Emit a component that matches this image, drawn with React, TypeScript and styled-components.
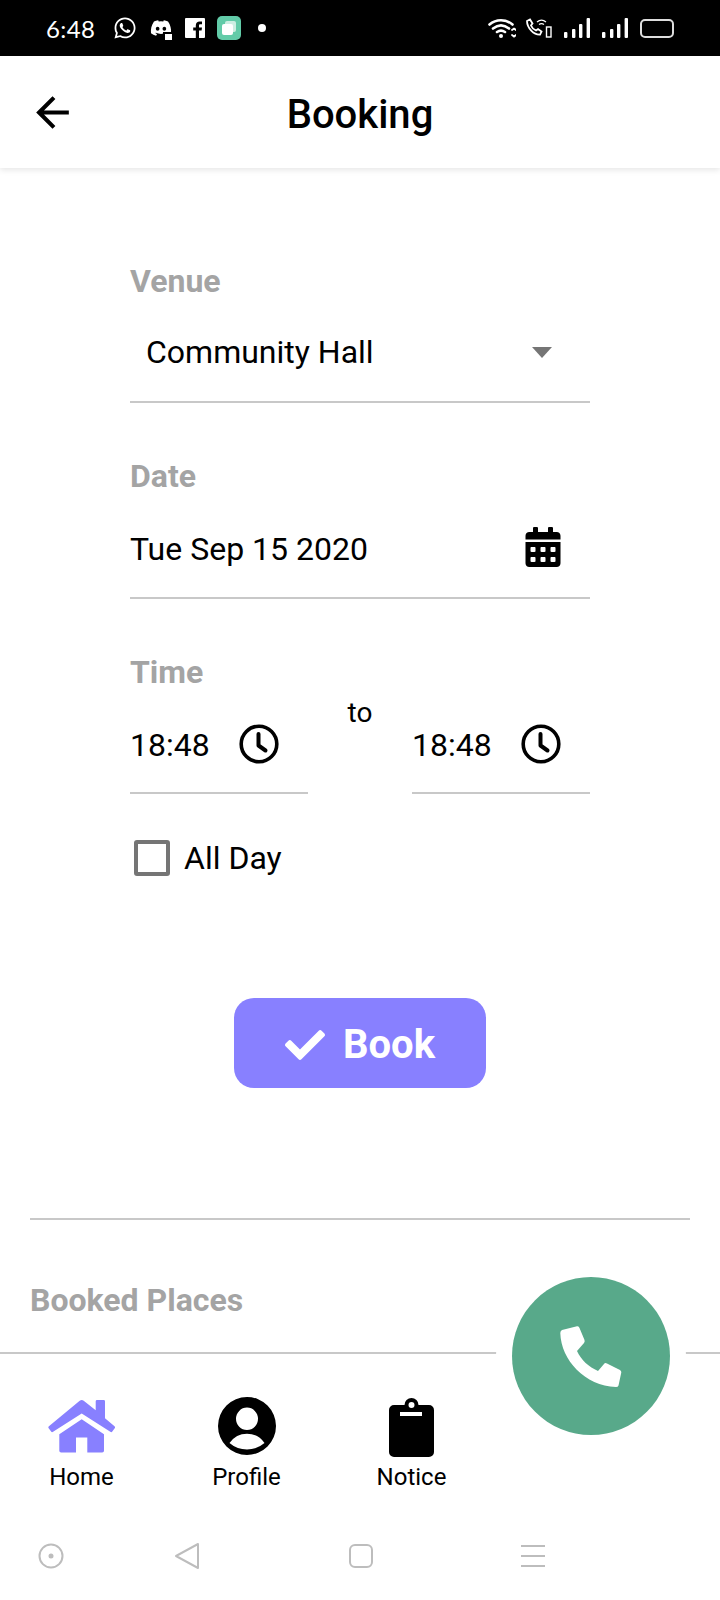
import React, { FC } from 'react';
import styled, { createGlobalStyle } from 'styled-components';
import { FaCalendarAlt, FaCheck, FaDiscord, FaWhatsapp } from 'react-icons/fa';
import { MdArrowBack } from 'react-icons/md';

const GlobalStyle = createGlobalStyle`
  html, body {
    margin: 0;
    padding: 0;
    background: #fff;
  }
  body {
    font-family: Roboto, 'Liberation Sans', sans-serif;
    color: #000;
  }
`;

const Screen = styled.div`
  position: relative;
  width: 720px;
  height: 1600px;
  display: flex;
  flex-direction: column;
  overflow: hidden;
  background: #fff;
`;

const StatusBar = styled.div`
  height: 56px;
  flex: none;
  background: #000;
  color: #fff;
  display: flex;
  align-items: center;
  padding: 0 46px 0 46px;
  box-sizing: border-box;
`;
const StatusTime = styled.span`
  font-family: Lato, Roboto, sans-serif;
  font-size: 24px;
  letter-spacing: 0.4px;
  width: 67px;
  padding-top: 1px;
`;
const StatusLeft = styled.div`
  display: flex;
  align-items: center;
  gap: 13px;
`;
const StatusRight = styled.div`
  margin-left: auto;
  display: flex;
  align-items: center;
  gap: 12px;
`;
const WifiSvg = styled.svg`
  margin-right: -3px;
`;
const Dot = styled.span`
  width: 8px;
  height: 8px;
  border-radius: 50%;
  background: #fff;
  margin-left: 4px;
`;
const AppBadge = styled.span`
  width: 24px;
  height: 24px;
  margin-left: -1px;
  border-radius: 5px;
  background: #62cba8;
  display: flex;
  align-items: center;
  justify-content: center;
`;
const DiscordWrap = styled.span`
  position: relative;
  display: flex;
`;
const DiscordBubble = styled.span`
  position: absolute;
  right: -2px;
  bottom: -3px;
  width: 7px;
  height: 6px;
  background: #fff;
  border: 2px solid #000;
`;
const Battery = styled.span`
  width: 30px;
  height: 15px;
  border: 2px solid #ddd;
  border-radius: 5px;
  box-sizing: content-box;
`;

const Header = styled.header`
  height: 112px;
  flex: none;
  display: flex;
  align-items: center;
  position: relative;
  justify-content: center;
  box-shadow: 0 2px 6px rgba(0, 0, 0, 0.1);
  z-index: 1;
`;
const BackButton = styled.span`
  position: absolute;
  left: 28px;
  top: 32px;
  display: flex;
`;
const Title = styled.h1`
  margin: 0;
  padding-top: 6px;
  font-size: 40px;
  font-weight: 500;
  line-height: 106px;
`;

const Form = styled.div`
  flex: none;
  padding: 95px 130px 0;
  display: flex;
  flex-direction: column;
`;
const Label = styled.div`
  font-size: 32px;
  font-weight: 700;
  line-height: 36px;
  color: #a4a4a4;
`;
const Field = styled.div<{ $indent?: number; $height?: number; $top?: number }>`
  height: ${p => p.$height || 104}px;
  display: flex;
  align-items: center;
  justify-content: space-between;
  padding-left: ${p => p.$indent || 0}px;
  padding-top: ${p => p.$top ?? 6}px;
  box-sizing: border-box;
  border-bottom: 2px solid #c8c8c8;
  margin-bottom: 55px;
  font-size: 32px;
`;
const Caret = styled.span`
  width: 0;
  height: 0;
  border-left: 10px solid transparent;
  border-right: 10px solid transparent;
  border-top: 11px solid #757575;
  margin-right: 38px;
`;
const CalendarWrap = styled.span`
  display: flex;
  margin-right: 27px;
  margin-top: -4px;
`;
const TimeRow = styled.div`
  display: flex;
  justify-content: space-between;
`;
const TimeField = styled(Field)`
  width: 178px;
  margin-bottom: 0;
  padding-right: 29px;
`;
const ToText = styled.span`
  font-size: 28px;
  line-height: 30px;
  margin-top: 8px;
`;
const ClockSvg = styled.svg`
  margin-top: -2px;
`;
const CheckRow = styled.div`
  display: flex;
  align-items: center;
  margin-top: 45px;
  padding-left: 4px;
  font-size: 32px;
  gap: 14px;
`;
const CheckBox = styled.span`
  width: 36px;
  height: 36px;
  border: 4px solid #757575;
  border-radius: 3px;
  box-sizing: border-box;
`;
const BookButton = styled.div`
  align-self: center;
  width: 252px;
  height: 90px;
  padding-top: 3px;
  box-sizing: border-box;
  margin-top: 121px;
  border-radius: 20px;
  background: #8880ff;
  color: #fff;
  display: flex;
  align-items: center;
  justify-content: center;
  gap: 18px;
  font-size: 40px;
  font-weight: 700;
`;

const Divider = styled.div`
  flex: none;
  height: 2px;
  margin: 130px 30px 0;
  background: #c8c8c8;
`;
const SectionTitle = styled.div`
  flex: none;
  margin: 62px 30px 0;
  font-size: 32px;
  font-weight: 700;
  line-height: 36px;
  color: #a4a4a4;
`;

const TabBar = styled.nav`
  flex: none;
  margin-top: 34px;
  height: 177px;
  border-top: 2px solid #c8c8c8;
  display: flex;
  margin-left: -1px;
`;
const Tab = styled.div`
  width: 165px;
  display: flex;
  flex-direction: column;
  align-items: center;
  font-size: 24px;
  line-height: 30px;
  padding-top: 43px;
  gap: 5px;
`;
const TabIcon = styled.span`
  height: 60px;
  display: flex;
  align-items: flex-start;
`;

const CallButton = styled.div`
  position: absolute;
  left: 496px;
  top: 1261px;
  width: 190px;
  height: 190px;
  border-radius: 50%;
  background: #fff;
  display: flex;
  align-items: center;
  justify-content: center;
`;
const CallCircle = styled.div`
  width: 158px;
  height: 158px;
  border-radius: 50%;
  background: #58a98a;
  display: flex;
  align-items: center;
  justify-content: center;
`;

const NavBar = styled.div`
  flex: none;
  display: flex;
  height: 50px;
  align-items: center;
  padding-left: 38px;
`;
const NavSlot = styled.span<{ $w: number }>`
  width: ${p => p.$w}px;
  display: flex;
`;

const FacebookIcon: FC = () => (
  <svg width="20" height="20" viewBox="0 0 20 20">
    <path fill="#fff" fillRule="evenodd" d="M1 0h18a1 1 0 0 1 1 1v18a1 1 0 0 1-1 1h-5v-7.600h2.600l.4-3h-3V7.600c0-.9.3-1.400 1.500-1.400H17V3.500c-.3 0-1.200-.1-2.300-.1-2.300 0-3.900 1.400-3.900 4v2H8.200v3h2.600V20H1a1 1 0 0 1-1-1V1a1 1 0 0 1 1-1z" />
  </svg>
);

const WifiIcon: FC = () => (
  <WifiSvg width="28" height="20" viewBox="0 0 28 20" fill="none" stroke="#fff" strokeLinecap="round">
    <path strokeWidth="2.600" d="M1.500 6.500C8 .8 18 .8 24.500 6.500M5 10.500c5-4 11-4 16 0M9 14c3-2 5-2 8 0" />
    <circle cx="13" cy="18" r="2" fill="#fff" stroke="none" />
    <path strokeWidth="1.800" d="M24 12l2-1.500 2 1.500M24 17l2 1.500 2-1.500" />
  </WifiSvg>
);

const CallWifiIcon: FC = () => (
  <svg width="27" height="20" viewBox="0 0 27 20" fill="none" stroke="#fff">
    <path strokeWidth="1.800" d="M2 3l3-1.500 2.500 4-1.500 2c1 2.500 2.500 4 5 5l2-1.400 3.500 2.500-1.500 3C9 17 2 10 2 3z" />
    <path strokeWidth="1.300" d="M12 4c3-2.500 6-2.500 9 0M14 6.500c2-1.300 3-1.300 5 0" />
    <rect x="21.500" y="9" width="4.500" height="10" strokeWidth="1.400" />
  </svg>
);

const SignalIcon: FC = () => (
  <svg width="26" height="20" viewBox="0 0 26 20" fill="#fff">
    <rect x="0" y="14" width="3.400" height="6" rx="1" />
    <rect x="8" y="11" width="3.400" height="9" rx="1" />
    <rect x="15" y="6" width="3.400" height="14" rx="1" />
    <rect x="22.600" y="0" width="3.400" height="20" rx="1" />
  </svg>
);

const ClockIcon: FC = () => (
  <ClockSvg width="40" height="40" viewBox="0 0 40 40" fill="none" stroke="#000">
    <circle cx="20" cy="20" r="17.800" strokeWidth="3.600" />
    <path strokeWidth="4" strokeLinecap="round" strokeLinejoin="round" d="M19.500 10v11.500l7 5" />
  </ClockSvg>
);

const HomeIcon: FC = () => (
  <svg width="68" height="60" viewBox="18 12.700 68 60" fill="#8880ff">
    <path d="M49.700 16.500Q51.700 15 53.700 16.500L65.700 26V17Q65.700 15.700 67 15.700H73.700Q75 15.700 75 17V34L84.500 42Q85.500 43 84.700 44L82.300 47.300Q81.500 48.500 80.300 47.500L51.700 29.300L23.100 47.500Q21.900 48.500 21.100 47.300L18.700 44Q17.900 43 18.900 42Z" />
    <path d="M51.700 35L74 50V66.500Q74 68.300 72.200 68.300H57.300V53.300H46V68.300H31.100Q29.300 68.300 29.300 66.500V50Z" />
  </svg>
);

const ProfileIcon: FC = () => (
  <svg width="58" height="58" viewBox="0 0 58 58">
    <path fillRule="evenodd" d="M29 0a29 29 0 1 1 0 58a29 29 0 0 1 0-58zM29 10.600a11 11.200 0 1 0 0 22.400a11 11.200 0 0 0 0-22.400zM11.500 46Q18 36.700 29 36.700T46.500 46Q39 52.500 29 52.500T11.500 46z" />
  </svg>
);

const ClipboardIcon: FC = () => (
  <svg width="45" height="60" viewBox="0 0 45 60">
    <path fillRule="evenodd" d="M5 8h10.500a7 7 0 0 1 14 0H40a5 5 0 0 1 5 5V55a5 5 0 0 1-5 5H5a5 5 0 0 1-5-5V13a5 5 0 0 1 5-5zM22.500 5a3 3 0 1 0 0 6a3 3 0 0 0 0-6zM11 15v4h22v-4z" />
  </svg>
);

const PhoneIcon: FC = () => (
  <svg width="62" height="63" viewBox="15 15 62 63">
    <path fill="#fff" d="M17 20L32 16.300Q34 16 34.500 18L39.500 30Q40 32 39 33L32 41C36 50 44 57 53 61L59 54Q60 52.500 62 53.500L75 60Q76.500 61 76.300 62.500L73.500 75.500Q73 77 71 77C40 76 16 50 15.300 23Q15.300 21 17 20Z" />
  </svg>
);

const Recents: FC = () => (
  <svg width="26" height="26" viewBox="0 0 26 26" fill="none" stroke="#bdbdbd" strokeWidth="2">
    <circle cx="13" cy="13" r="11.500" />
    <circle cx="13" cy="13" r="2.500" fill="#bdbdbd" stroke="none" />
  </svg>
);
const BackNav: FC = () => (
  <svg width="26" height="28" viewBox="0 0 26 28" fill="none" stroke="#bdbdbd" strokeWidth="2" strokeLinejoin="round">
    <path d="M24 2v24L2 14z" />
  </svg>
);
const HomeNav: FC = () => (
  <svg width="26" height="26" viewBox="0 0 26 26" fill="none" stroke="#bdbdbd" strokeWidth="2">
    <rect x="2" y="2" width="22" height="22" rx="5" />
  </svg>
);
const MenuNav: FC = () => (
  <svg width="26" height="24" viewBox="0 0 26 24" stroke="#bdbdbd" strokeWidth="2">
    <path d="M1 2h24M1 12h24M1 22h24" />
  </svg>
);

const TimePicker: FC<{ value: string }> = ({ value }) => (
  <TimeField $top={7}>
    {value}
    <ClockIcon />
  </TimeField>
);

const App: FC = () => {
  return (
    <Screen>
      <GlobalStyle />
      <StatusBar>
        <StatusTime>6:48</StatusTime>
        <StatusLeft>
          <FaWhatsapp size={24} />
          <DiscordWrap>
            <FaDiscord size={22} />
            <DiscordBubble />
          </DiscordWrap>
          <FacebookIcon />
          <AppBadge>
            <svg width="16" height="16" viewBox="0 0 16 16">
              <rect x="4" y="1" width="11" height="11" rx="2" fill="#cdeee2" />
              <rect x="1" y="4" width="11" height="11" rx="2" fill="#fff" />
            </svg>
          </AppBadge>
          <Dot />
        </StatusLeft>
        <StatusRight>
          <WifiIcon />
          <CallWifiIcon />
          <SignalIcon />
          <SignalIcon />
          <Battery />
        </StatusRight>
      </StatusBar>
      <Header>
        <BackButton>
          <MdArrowBack size={49} />
        </BackButton>
        <Title>Booking</Title>
      </Header>
      <Form>
        <Label>Venue</Label>
        <Field $indent={16} $top={4}>
          Community Hall
          <Caret />
        </Field>
        <Label>Date</Label>
        <Field $height={105}>
          Tue Sep 15 2020
          <CalendarWrap>
            <FaCalendarAlt size={40} />
          </CalendarWrap>
        </Field>
        <Label>Time</Label>
        <TimeRow>
          <TimePicker value="18:48" />
          <ToText>to</ToText>
          <TimePicker value="18:48" />
        </TimeRow>
        <CheckRow>
          <CheckBox />
          All Day
        </CheckRow>
        <BookButton>
          <FaCheck size={40} />
          Book
        </BookButton>
      </Form>
      <Divider />
      <SectionTitle>Booked Places</SectionTitle>
      <TabBar>
        <Tab>
          <TabIcon>
            <HomeIcon />
          </TabIcon>
          Home
        </Tab>
        <Tab>
          <TabIcon>
            <ProfileIcon />
          </TabIcon>
          Profile
        </Tab>
        <Tab>
          <TabIcon>
            <ClipboardIcon />
          </TabIcon>
          Notice
        </Tab>
      </TabBar>
      <CallButton>
        <CallCircle>
          <PhoneIcon />
        </CallCircle>
      </CallButton>
      <NavBar>
        <NavSlot $w={136}>
          <Recents />
        </NavSlot>
        <NavSlot $w={174}>
          <BackNav />
        </NavSlot>
        <NavSlot $w={172}>
          <HomeNav />
        </NavSlot>
        <NavSlot $w={26}>
          <MenuNav />
        </NavSlot>
      </NavBar>
    </Screen>
  );
};

export default App;
